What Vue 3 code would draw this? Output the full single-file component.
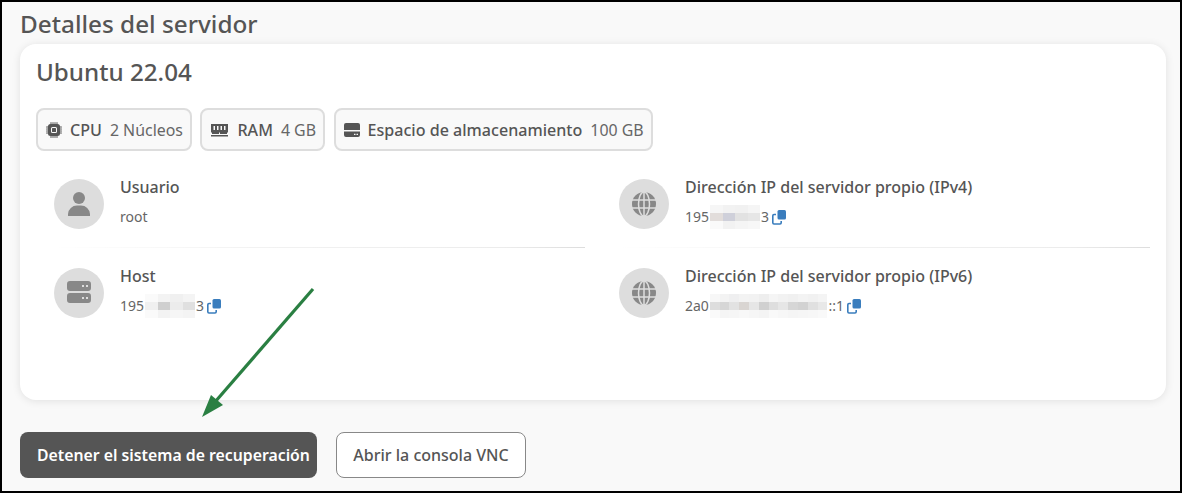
<script setup>
const specs = [
  { key: 'cpu', label: 'CPU', value: '2 Núcleos' },
  { key: 'ram', label: 'RAM', value: '4 GB' },
  { key: 'disk', label: 'Espacio de almacenamiento', value: '100 GB' }
]

const hostMask = ['#fafafa #f3f3f3 #f0f0f0 #f4f4f4', '#f0f0f0 #cfcfcf #ececec #e0e0e0', '#fafafa #f3f3f3 #f6f6f6 #f4f4f4']
const ipv4Mask = ['#f6f6f6 #f2f2f2 #f1f1f1 #f5f5f5', '#e2dddb #cfd0da #e2e2e2 #e6e6e6', '#fafafa #f2f2f2 #f5f5f5 #f7f7f7']
const ipv6Mask = [
  '#f7f7f7 #f3f3f3 #efeff0 #f3f3f3 #f2f2f2 #eeeeee #f5f5f5 #f2f2f2 #f0f0f0 #f3f3f3 #f1f1f1 #f4f4f4',
  '#dddddd #d6d6d6 #e2e2e2 #d9d5d2 #e6e6e6 #d0d0d0 #dedede #e6e6e6 #d6d6d6 #d2d2d2 #e0e0e0 #e8e8e8',
  '#fafafa #f5f5f5 #f6f6f6 #f8f8f8 #f6f6f6 #f4f4f4 #f9f9f9 #f7f7f7 #f5f5f5 #f6f6f6 #f7f7f7 #f9f9f9'
]

const rows = [
  { icon: 'user', title: 'Usuario', value: 'root' },
  { icon: 'globe', title: 'Dirección IP del servidor propio (IPv4)', before: '195', mask: ipv4Mask, cell: 12.5, after: '3', copy: true },
  { icon: 'server', title: 'Host', before: '195', mask: hostMask, cell: 12.5, after: '3', copy: true },
  { icon: 'globe', title: 'Dirección IP del servidor propio (IPv6)', before: '2a0', mask: ipv6Mask, cell: 9.8, after: '::1', copy: true }
]

const cells = (mask) => mask.flatMap((line) => line.split(' '))
</script>

<template>
  <div class="page">
    <h2 class="heading">Detalles del servidor</h2>

    <section class="card">
      <h3 class="os">Ubuntu 22.04</h3>

      <div class="specs">
        <div v-for="s in specs" :key="s.key" class="chip">
          <svg v-if="s.key === 'cpu'" width="16" height="16" viewBox="0 0 16 16" fill="#555">
            <path d="M6.5 6a.5.5 0 0 0-.5.5v3a.5.5 0 0 0 .5.5h3a.5.5 0 0 0 .5-.5v-3a.5.5 0 0 0-.5-.5h-3z" />
            <path d="M5.5.5a.5.5 0 0 0-1 0V2A2.5 2.5 0 0 0 2 4.5H.5a.5.5 0 0 0 0 1H2v1H.5a.5.5 0 0 0 0 1H2v1H.5a.5.5 0 0 0 0 1H2v1H.5a.5.5 0 0 0 0 1H2A2.5 2.5 0 0 0 4.5 14v1.5a.5.5 0 0 0 1 0V14h1v1.5a.5.5 0 0 0 1 0V14h1v1.5a.5.5 0 0 0 1 0V14h1v1.5a.5.5 0 0 0 1 0V14a2.5 2.5 0 0 0 2.5-2.5h1.5a.5.5 0 0 0 0-1H14v-1h1.5a.5.5 0 0 0 0-1H14v-1h1.5a.5.5 0 0 0 0-1H14v-1h1.5a.5.5 0 0 0 0-1H14A2.5 2.5 0 0 0 11.5 2V.5a.5.5 0 0 0-1 0V2h-1V.5a.5.5 0 0 0-1 0V2h-1V.5a.5.5 0 0 0-1 0V2h-1V.5zm1 4.5h3A1.5 1.5 0 0 1 11 6.5v3A1.5 1.5 0 0 1 9.5 11h-3A1.5 1.5 0 0 1 5 9.5v-3A1.5 1.5 0 0 1 6.5 5z" />
          </svg>
          <svg v-else-if="s.key === 'ram'" width="19" height="14" viewBox="0 0 19 14" fill="#555">
            <path d="M1 1h17v8.5h-1V11h-7V9.5H9V11H2V9.5H1zM3.5 3v4h1.5V3zm3.500 0v4h1.500V3zm3.500 0v4H12V3zm3.500 0v4h1.500V3z" fill-rule="evenodd" />
            <rect x="1" y="12" width="17" height="1.500" />
          </svg>
          <svg v-else width="16" height="14" viewBox="0 0 16 14" fill="#555">
            <path d="M2 0h12a2 2 0 0 1 2 2v5H0V2a2 2 0 0 1 2-2z" />
            <path d="M0 8.500h16V12a2 2 0 0 1-2 2H2a2 2 0 0 1-2-2zm10 2.200v1.300h1.500v-1.300zm2.500 0v1.300H14v-1.300z" fill-rule="evenodd" />
          </svg>
          <span class="chip-label">{{ s.label }}</span>
          <span class="chip-value">{{ s.value }}</span>
        </div>
      </div>

      <div class="details">
        <div v-for="r in rows" :key="r.title" class="row">
          <div class="avatar">
            <svg v-if="r.icon === 'user'" width="24" height="24" viewBox="0 -1 24 24" fill="#888">
              <circle cx="12" cy="5" r="6" />
              <path d="M1 23v-2a9 9 0 0 1 9-8.500h4a9 9 0 0 1 9 8.500v2z" />
            </svg>
            <svg v-else-if="r.icon === 'server'" width="24" height="24" viewBox="0 1 24 24" fill="#888">
              <path d="M3 1h18a3 3 0 0 1 3 3v4a3 3 0 0 1-3 3H3a3 3 0 0 1-3-3V4a3 3 0 0 1 3-3zm12 4v2h2V5zm4 0v2h2V5z" fill-rule="evenodd" />
              <path d="M3 13h18a3 3 0 0 1 3 3v4a3 3 0 0 1-3 3H3a3 3 0 0 1-3-3v-4a3 3 0 0 1 3-3zm12 4v2h2v-2zm4 0v2h2v-2z" fill-rule="evenodd" />
            </svg>
            <svg v-else width="24" height="24" viewBox="0 0 24 24">
              <circle cx="12" cy="12" r="12" fill="#888" />
              <g fill="none" stroke="#ddd" stroke-width="1.500">
                <ellipse cx="12" cy="12" rx="5.500" ry="12" />
                <path d="M12 0v24M0 8h24M0 16h24" />
              </g>
            </svg>
          </div>
          <div class="info">
            <div class="info-title">{{ r.title }}</div>
            <div class="info-value">
              <template v-if="r.value">{{ r.value }}</template>
              <template v-else>
                <span>{{ r.before }}</span>
                <span class="mask" :style="{ gridTemplateColumns: `repeat(${r.mask[0].split(' ').length}, ${r.cell}px)` }">
                  <i v-for="(c, n) in cells(r.mask)" :key="n" :style="{ background: c }"></i>
                </span>
                <span>{{ r.after }}</span>
                <svg class="copy" width="14" height="15" viewBox="0 0 14 15">
                  <rect x="5.500" y="0" width="8.500" height="9.500" rx="1.500" fill="#3a7dbd" />
                  <path d="M4 4.500H2A1.200 1.200 0 0 0 .8 5.700v7.100A1.200 1.200 0 0 0 2 14h6a1.200 1.200 0 0 0 1.200-1.200V11" fill="none" stroke="#3a7dbd" stroke-width="1.600" />
                </svg>
              </template>
            </div>
          </div>
        </div>
      </div>
    </section>

    <div class="actions">
      <button class="btn btn-dark">Detener el sistema de recuperación</button>
      <button class="btn btn-light">Abrir la consola VNC</button>
    </div>

    <!-- annotation arrow drawn over the screenshot -->
    <svg class="arrow" width="1182" height="493" viewBox="0 0 1182 493">
      <path d="M313 289L215 402" stroke="#2a7f42" stroke-width="3.200" fill="none" />
      <path d="M202 417L211 395L223 405z" fill="#2a7f42" />
    </svg>
  </div>
</template>

<style scoped>
.page {
  position: relative;
  box-sizing: border-box;
  width: 1182px;
  height: 493px;
  overflow: hidden;
  border: 2px solid #000;
  background: #f9f9f9;
  padding: 0 14px 0 18px;
  font-family: "Noto Sans", "Open Sans", sans-serif;
  color: #555;
}

.heading {
  margin: 6px 0 0;
  height: 36px;
  font-size: 24.3px;
  line-height: 32px;
  font-weight: 500;
}

.card {
  box-sizing: border-box;
  height: 356px;
  padding: 11px 16px 0 16px;
  background: #fff;
  border-radius: 16px;
  box-shadow: 0 1px 8px rgba(0, 0, 0, 0.1);
}

.os {
  margin: 0;
  font-size: 24.2px;
  line-height: 34px;
  font-weight: 500;
}

.specs {
  display: flex;
  gap: 8.5px;
  margin-top: 19px;
}

.chip {
  box-sizing: border-box;
  height: 43px;
  display: flex;
  align-items: center;
  padding: 0 7px 0 8px;
  background: #f9f9f9;
  border: 2px solid #ddd;
  border-radius: 8px;
  font-size: 16.08px;
  white-space: nowrap;
}

.chip-label {
  margin-left: 8px;
  font-weight: 500;
}

.chip-value {
  margin-left: 8px;
  font-size: 15.9px;
  color: #666;
}

.details {
  display: grid;
  grid-template-columns: 549px 548px;
  column-gap: 17px;
  margin-top: 6px;
}

.row {
  box-sizing: border-box;
  height: 89px;
  display: flex;
  align-items: flex-start;
  padding: 20px 0 0 18px;
}

.row:nth-child(even) {
  padding-left: 17px;
}

.row:nth-child(-n + 2) {
  height: 91px;
  padding-top: 22px;
  border-bottom: 1px solid #eee;
  /* the rule fades in from the left and is strongest at its right end */
  border-image: linear-gradient(90deg, #fff 3%, #f2f2f2 40%, #ececec 85%, #ddd) 1;
}

.avatar {
  flex: none;
  width: 50px;
  height: 50px;
  border-radius: 50%;
  background: #ddd;
  display: flex;
  align-items: center;
  justify-content: center;
}

.info {
  margin-left: 16px;
}

.info-title {
  margin-top: -3px;
  font-size: 16px;
  line-height: 22px;
  font-weight: 500;
}

.info-value {
  display: flex;
  align-items: center;
  height: 24px;
  margin-top: 7px;
  font-size: 14px;
  line-height: 24px;
  color: #666;
}

.mask {
  display: grid;
  grid-auto-rows: 8px;
  margin: 0 1px;
}

.mask i {
  display: block;
}

.copy {
  margin-left: 3px;
}

.actions {
  display: flex;
  gap: 19px;
  margin-top: 32px;
}

.btn {
  box-sizing: border-box;
  height: 46px;
  border-radius: 8px;
  font-family: inherit;
  font-size: 16px;
  font-weight: 500;
  padding: 0;
}

.btn-dark {
  width: 297px;
  padding-left: 17px;
  text-align: left;
  border: none;
  background: #555;
  color: #fff;
  font-size: 15.8px;
  font-weight: 600;
}

.btn-light {
  width: 190px;
  background: #fff;
  border: 1px solid #888;
  color: #555;
}

.arrow {
  position: absolute;
  left: -2px;
  top: -2px;
  pointer-events: none;
}
</style>
